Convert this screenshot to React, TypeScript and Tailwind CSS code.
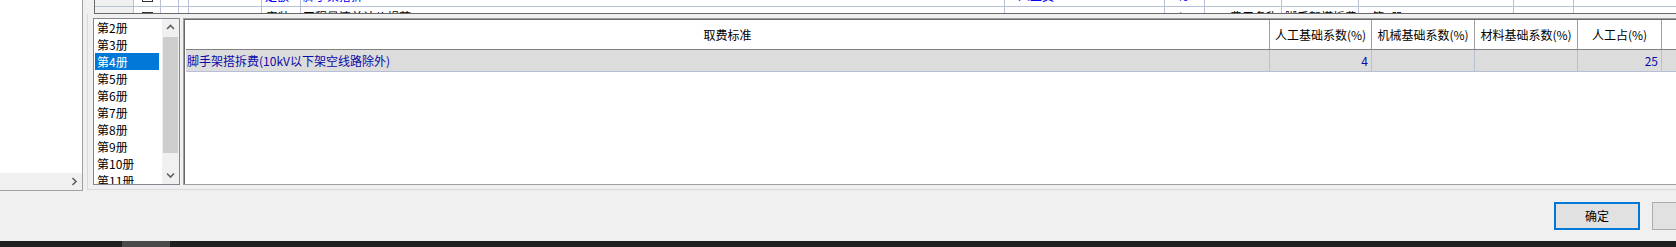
import React from 'react';

const FONT = "font-['Noto_Sans_CJK_SC','Noto_Sans',sans-serif]";

// 上部グリッド（見切れている部分）の列幅
const STUB_COLS: { w: string; r1?: React.ReactNode; r2?: React.ReactNode; gray?: boolean }[] = [
  { w: 'w-[39px]', gray: true },
  { w: 'w-[27px]', r1: 'box', r2: 'box' },
  { w: 'w-[18px]' },
  { w: 'w-[10px]' },
  { w: 'w-[73px]' },
  { w: 'w-[39px]', r1: <span className="pl-[3px] text-[#0000ff]">定额</span>, r2: <span className="pl-[4px]">安装</span> },
  { w: 'w-[704px]', r1: <span className="pl-[2px] text-[#0000ff]">脚手架搭拆</span>, r2: <span className="pl-[2px]">工程量清单计价规范</span> },
  { w: 'w-[160px]', r1: <span className="pl-[13px] text-[#0000ff]">人工费</span> },
  { w: 'w-[40px]', r1: <span className="pl-[12px] text-[#0000ff]">%</span>, r2: <span className="pl-[14px]">'</span> },
  { w: 'w-[77px]', r2: <span className="pl-[25px]">费用名称</span> },
  { w: 'w-[77px]', r2: <span className="pl-[3px]">脚手架搭拆费</span> },
  { w: 'w-[155px]', r2: <span className="pl-[13px]">第4册</span> },
  { w: 'w-[60px]' },
];

const BOOKS = ['第2册', '第3册', '第4册', '第5册', '第6册', '第7册', '第8册', '第9册', '第10册', '第11册'];

const COLUMNS = [
  { title: '取费标准', w: 'w-[1084px]', value: '' },
  { title: '人工基础系数(%)', w: 'w-[102px]', value: '4' },
  { title: '机械基础系数(%)', w: 'w-[103px]', value: '' },
  { title: '材料基础系数(%)', w: 'w-[103px]', value: '' },
  { title: '人工占(%)', w: 'w-[84px]', value: '25' },
  { title: '材料占(%)', w: 'w-[84px]', value: '' },
];

function Chevron({ dir }: { dir: 'up' | 'down' | 'right' }) {
  const d =
    dir === 'up' ? 'M1 5 L4.5 1.5 L8 5' : dir === 'down' ? 'M1 1.5 L4.5 5 L8 1.5' : 'M1.5 1 L5 4.5 L1.5 8';
  const size = dir === 'right' ? { w: 7, h: 9 } : { w: 9, h: 7 };
  return (
    <svg width={size.w} height={size.h} viewBox={`0 0 ${size.w} ${size.h}`}>
      <path d={d} fill="none" stroke="#606060" strokeWidth="1.6" />
    </svg>
  );
}

function StubCell({ content }: { content?: React.ReactNode }) {
  if (content === 'box') {
    return (
      <div className="flex h-full items-center pl-[8px]">
        <div className="h-[11px] w-[11px] border border-[#333333] bg-white" />
      </div>
    );
  }
  return <div className="flex h-full items-center whitespace-nowrap overflow-hidden">{content}</div>;
}

export default function App() {
  return (
    <div className={`w-[1676px] h-[247px] overflow-hidden bg-[#f0f0f0] text-[12px] text-black ${FONT}`}>
      <div className="w-[1760px]">
        {/* 上段 */}
        <div className="flex h-[191px] items-start">
          {/* 左パネル */}
          <div className="flex h-[191px] w-[83px] shrink-0 flex-col border-r border-b border-[#a0a0a0] bg-white">
            <div className="flex-1" />
            <div className="flex h-[17px] items-center justify-end bg-[#f0f0f0] pr-[4px]">
              <Chevron dir="right" />
            </div>
          </div>

          <div className="flex min-w-0 flex-1 flex-col">
            {/* 見切れた明細グリッド */}
            <div className="ml-[11px] h-[14px] overflow-hidden border-l border-b border-[#696969] bg-white">
              <div className="mt-[-14px]">
                {[0, 1].map((r) => (
                  <div key={r} className="flex h-[21px] border-b border-[#b8c0d8]">
                    {STUB_COLS.map((c, i) => (
                      <div
                        key={i}
                        className={`${c.w} shrink-0 border-r border-[#b8c0d8] ${c.gray ? 'bg-[#f0f0f0]' : ''}`}
                      >
                        <StubCell content={r === 0 ? c.r1 : c.r2} />
                      </div>
                    ))}
                    <div className="flex-1" />
                  </div>
                ))}
              </div>
            </div>

            {/* グループ枠 */}
            <div className="ml-[4px] flex h-[176px] min-w-0 gap-[3px] border-l border-b border-[#dadada] pt-[4px] pl-[5px] pb-[4px]">
              {/* 冊リスト */}
              <div className="flex h-[167px] w-[87px] shrink-0 border border-[#828790] bg-white">
                <div className="flex-1 overflow-hidden">
                  {BOOKS.map((b) => (
                    <div
                      key={b}
                      className={`ml-[1px] mr-[3px] flex h-[17px] items-center pl-[2px] leading-none ${
                        b === '第4册' ? 'bg-[#0078d7] text-white' : ''
                      }`}
                    >
                      {b}
                    </div>
                  ))}
                </div>
                <div className="flex w-[17px] flex-col bg-[#f0f0f0]">
                  <div className="flex h-[17px] items-center justify-center">
                    <Chevron dir="up" />
                  </div>
                  <div className="mx-[1px] mt-[1px] h-[116px] bg-[#cdcdcd]" />
                  <div className="flex-1" />
                  <div className="flex h-[17px] items-center justify-center">
                    <Chevron dir="down" />
                  </div>
                </div>
              </div>

              {/* 取費グリッド */}
              <div className="h-[167px] min-w-0 flex-1 overflow-hidden border border-[#a0a0a0] bg-white">
                <div className="h-full border-l border-t border-[#696969] pl-[1px]">
                  <div className="flex h-[30px] border-b border-[#808080]">
                    {COLUMNS.map((c, i) => (
                      <div
                        key={i}
                        className={`${c.w} flex shrink-0 items-center justify-center border-r border-[#a0a0a0] whitespace-nowrap`}
                      >
                        {c.title}
                      </div>
                    ))}
                  </div>
                  <div className="flex h-[22px] border-b border-[#b8c0d8] bg-[#dcdcdc] text-[#0a0aa8]">
                    {COLUMNS.map((c, i) => (
                      <div
                        key={i}
                        className={`${c.w} flex shrink-0 items-center border-r border-[#b8c0d8] whitespace-nowrap ${
                          i === 0 ? 'pl-[1px]' : 'justify-end pr-[3px]'
                        }`}
                      >
                        {i === 0 ? '脚手架搭拆费(10kV以下架空线路除外)' : c.value}
                      </div>
                    ))}
                  </div>
                </div>
              </div>
            </div>
          </div>
        </div>

        {/* ボタン */}
        <div className="flex h-[50px] justify-end gap-[12px] pt-[11px] pr-[22px]">
          <button
            type="button"
            className="h-[28px] w-[86px] border-2 border-[#0078d7] bg-[#e1e1e1] text-[12px] text-black"
          >
            确定
          </button>
          <button
            type="button"
            className="h-[28px] w-[86px] border border-[#adadad] bg-[#e1e1e1] text-[12px] text-black"
          >
            取消
          </button>
        </div>

        {/* タスクバー */}
        <div className="flex h-[6px] w-[1676px] bg-[#1f1f1f]">
          <div className="ml-[122px] w-[48px] bg-[#4a4a4a]" />
        </div>
      </div>
    </div>
  );
}
